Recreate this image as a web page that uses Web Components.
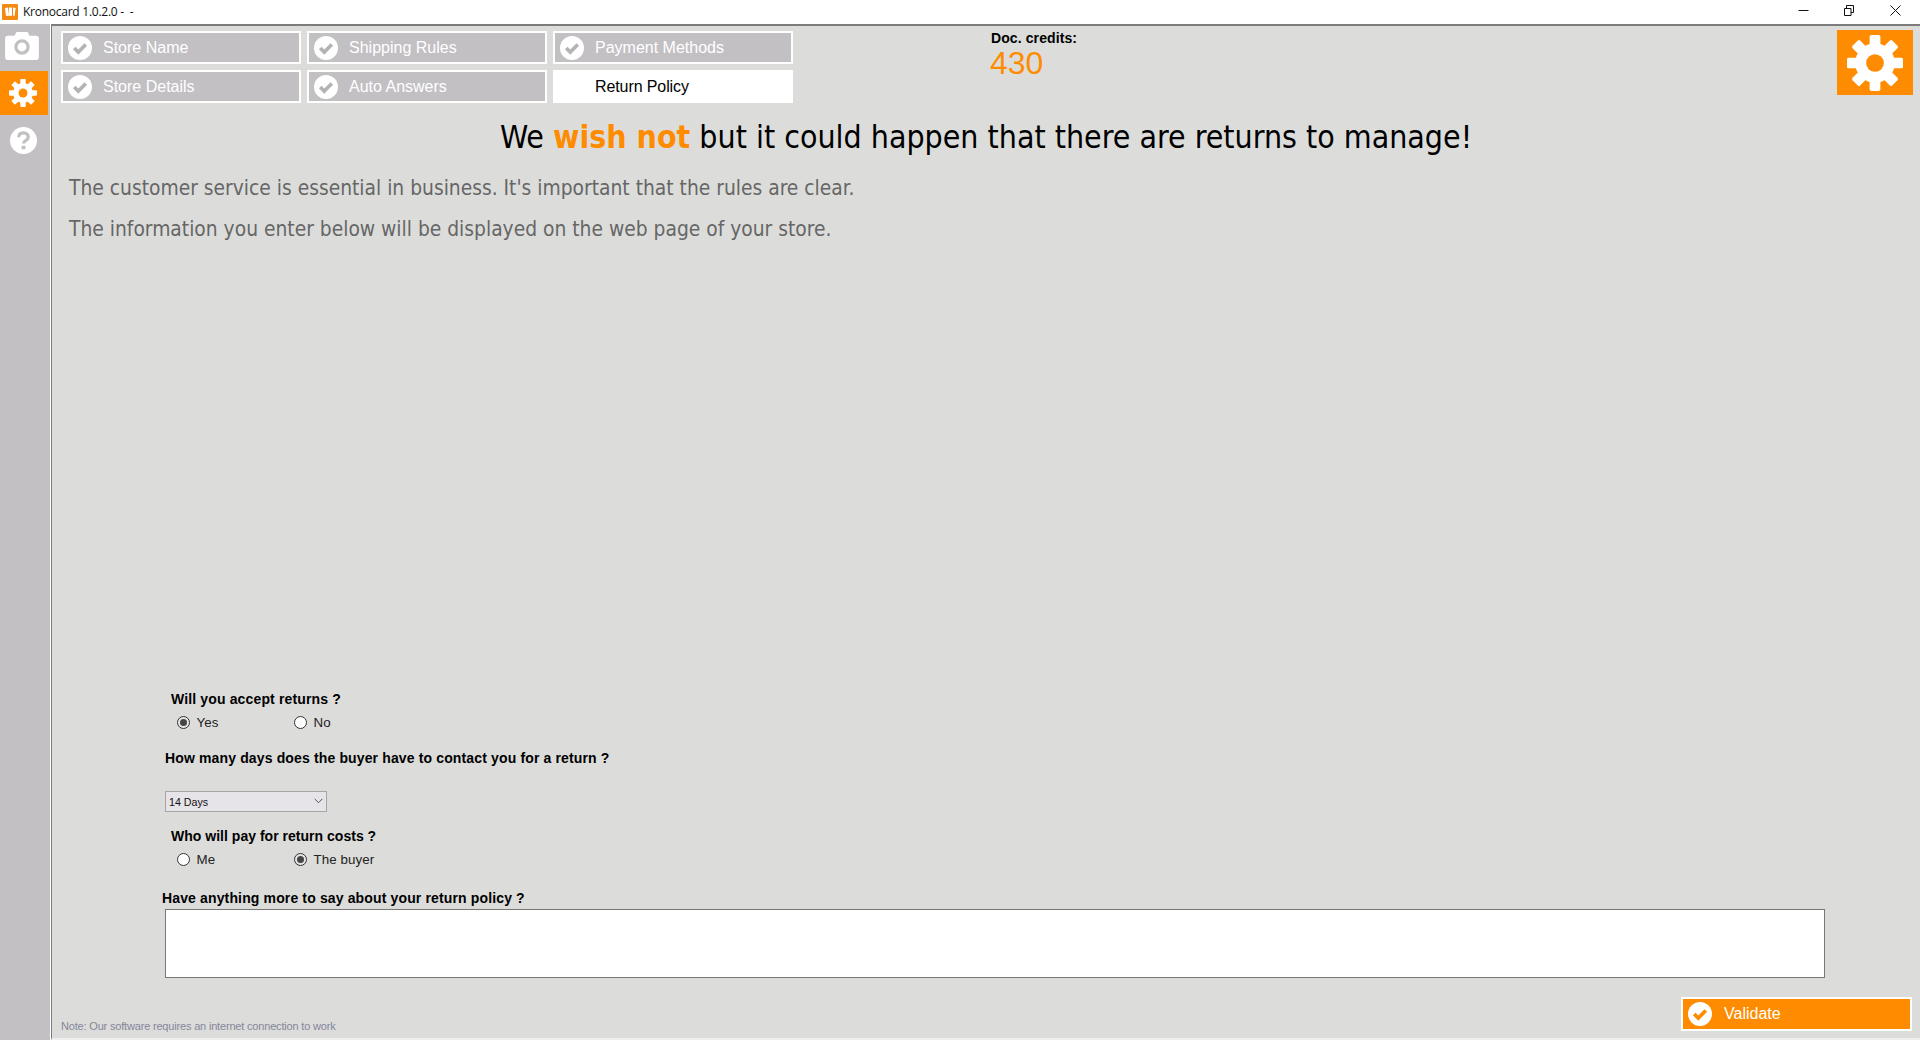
<!DOCTYPE html>
<html>
<head>
<meta charset="utf-8">
<title>Kronocard</title>
<style>
    html, body { margin: 0; height: 100%; overflow: hidden; }
    body { font-family: "Liberation Sans", Arial, sans-serif; background: #dcdddb; }
</style>
</head>
<body>
<kro-window>
    <kro-titlebar slot="bar" caption="Kronocard 1.0.2.0 -  -"></kro-titlebar>
    <kro-rail slot="rail"></kro-rail>
    <kro-header>
        <kro-tab done>Store Name</kro-tab>
        <kro-tab done>Shipping Rules</kro-tab>
        <kro-tab done>Payment Methods</kro-tab>
        <kro-tab done>Store Details</kro-tab>
        <kro-tab done>Auto Answers</kro-tab>
        <kro-tab current>Return Policy</kro-tab>
    </kro-header>
    <kro-intro></kro-intro>
    <kro-return-form></kro-return-form>
</kro-window>

<script>
// gear is used twice (rail + top right), hole takes the colour of the tile behind it
function gearSvg(size, hole) {
    let teeth = "";
    for (let a = 0; a < 360; a += 45) {
        teeth += `<rect x="-4.6" y="-24" width="9.2" height="12" rx="1.4" transform="rotate(${a})"/>`;
    }
    return `<svg width="${size}" height="${size}" viewBox="-24 -24 48 48" fill="#fff">
        ${teeth}<circle r="17"/><circle r="7.6" fill="${hole}"/></svg>`;
}

function checkSvg(color) {
    return `<svg width="24" height="24" viewBox="0 0 24 24">
        <circle cx="12" cy="12" r="12" fill="#fff"/>
        <path d="M6.2 12l4.100 4.100 7.500-7.500" fill="none" stroke="${color}" stroke-width="3.600"/></svg>`;
}

class KroWindow extends HTMLElement {
    constructor() {
        super();
        this.attachShadow({ mode: "open" });
        this.shadowRoot.innerHTML = `
            <style>
                :host { display: grid; grid-template-rows: 24px 1fr; grid-template-columns: 50px 1fr; width: 1920px; height: 1040px; }
                .bar { grid-column: 1 / 3; }
                .main {
                    display: flex; flex-direction: column; min-width: 0; min-height: 0;
                    border-left: 2px solid #fff; box-sizing: border-box;
                    background: #dcdddb;
                }
                .inner {
                    flex: 1; display: flex; flex-direction: column; min-height: 0;
                    border-left: 1px solid #7c7c7c; border-top: 2px solid #7c7c7c; border-bottom: 2px solid #eee;
                    margin-left: -1px;
                }
            </style>
            <div class="bar"><slot name="bar"></slot></div>
            <slot name="rail"></slot>
            <div class="main"><div class="inner"><slot></slot></div></div>
        `;
    }
}

class KroTitlebar extends HTMLElement {
    constructor() {
        super();
        this.attachShadow({ mode: "open" });
        this.shadowRoot.innerHTML = `
            <style>
                :host { display: flex; align-items: center; height: 24px; box-sizing: border-box; padding-bottom: 1px; background: #fff; font: 12px "Open Sans", "Noto Sans", sans-serif; color: #111; }
                .logo { margin: 0 5px 0 2px; display: block; }
                .cap { white-space: pre; letter-spacing: -0.25px; }
                .ctl { margin-left: auto; display: flex; align-self: flex-start; }
                .ctl svg { display: block; width: 46px; height: 20px; }
            </style>
            <svg class="logo" width="16" height="16" viewBox="0 0 16 16">
                <rect width="16" height="16" rx="1" fill="#f48a12"/>
                <path d="M3 4l3-.6 1 8-3 .6zM7 3.4h3v8.4H7zM11 3.4l2.6.5-1 8-1.6-.3z" fill="#fff"/>
            </svg>
            <span class="cap"></span>
            <div class="ctl">
                <svg viewBox="0 0 46 20"><path d="M16.500 10.500h10" stroke="#111" fill="none"/></svg>
                <svg viewBox="0 0 46 20"><path d="M16.500 8.500h6.500v7h-6.500zM18.500 8.500v-3h7v7h-2.500" stroke="#111" fill="none"/></svg>
                <svg viewBox="0 0 46 20"><path d="M16.500 5.500l10 10M26.500 5.500l-10 10" stroke="#111" fill="none"/></svg>
            </div>
        `;
    }
    connectedCallback() {
        this.shadowRoot.querySelector(".cap").textContent = this.getAttribute("caption");
    }
}

class KroRail extends HTMLElement {
    constructor() {
        super();
        this.attachShadow({ mode: "open" });
        this.shadowRoot.innerHTML = `
            <style>
                :host { display: flex; flex-direction: column; background: #c3c0c4; }
                .item { width: 46px; padding-right: 2px; display: flex; align-items: center; justify-content: center; }
                .cam { height: 47px; align-items: flex-start; }
                .cam svg { margin: 7px 2px 0 0; }
                .on { height: 44px; background: #ff8c00; }
                .help { height: 50px; }
                svg { display: block; }
            </style>
            <div class="item cam">
                <svg width="34" height="30" viewBox="0 0 36 32">
                    <path d="M3 5h7l2-4h12l2 4h7a3 3 0 0 1 3 3v20a3 3 0 0 1-3 3H3a3 3 0 0 1-3-3V8a3 3 0 0 1 3-3z" fill="#fff"/>
                    <circle cx="18" cy="17" r="6.500" fill="none" stroke="#c3c0c4" stroke-width="3.500"/>
                </svg>
            </div>
            <div class="item on">${gearSvg(28, "#ff8c00")}</div>
            <div class="item help">
                <svg width="27" height="27" viewBox="0 0 28 28">
                    <circle cx="14" cy="14" r="14" fill="#fff"/>
                    <path d="M9 10.500c0-3 2.300-4.500 5-4.500s5 1.700 5 4.300c0 3.700-5 3.700-5 6.700" fill="none" stroke="#c3c0c4" stroke-width="3.400"/>
                    <rect x="12" y="19.500" width="4" height="3.600" fill="#c3c0c4"/>
                </svg>
            </div>
        `;
    }
}

class KroHeader extends HTMLElement {
    constructor() {
        super();
        this.attachShadow({ mode: "open" });
        this.shadowRoot.innerHTML = `
            <style>
                :host { display: flex; align-items: flex-start; padding: 5px 7px 0 9px; }
                .tabs { display: grid; grid-template-columns: repeat(3, 240px); grid-auto-rows: 33px; column-gap: 6px; row-gap: 6px; }
                .credits { margin-left: 197px; color: #000; }
                .credits b { display: block; font-size: 14px; line-height: 15px; margin-left: 1px; letter-spacing: 0.1px; }
                .credits span { display: block; font-size: 32px; line-height: 34px; color: #ff8c00; }
                .gear { margin-left: auto; margin-top: -1px; width: 76px; height: 65px; background: #ff8c00; display: flex; align-items: center; justify-content: center; }
                svg { display: block; }
            </style>
            <div class="tabs"><slot></slot></div>
            <div class="credits"><b>Doc. credits:</b><span>430</span></div>
            <div class="gear">${gearSvg(56, "#ff8c00")}</div>
        `;
    }
}

class KroTab extends HTMLElement {
    constructor() {
        super();
        this.attachShadow({ mode: "open" });
        this.shadowRoot.innerHTML = `
            <style>
                :host {
                    display: flex; align-items: center; box-sizing: border-box; position: relative;
                    padding-left: 40px; border: 2px solid #fff; background: #c3c0c4; color: #fff; font-size: 16px;
                }
                :host([current]) { background: #fff; color: #000; letter-spacing: -0.1px; }
                .ic { position: absolute; left: 5px; top: 2.500px; display: block; }
            </style>
            <span class="ic"></span>
            <slot></slot>
        `;
    }
    connectedCallback() {
        if (this.hasAttribute("done")) {
            this.shadowRoot.querySelector(".ic").innerHTML = checkSvg("#b5b2b6");
        }
    }
}

class KroIntro extends HTMLElement {
    constructor() {
        super();
        this.attachShadow({ mode: "open" });
        this.shadowRoot.innerHTML = `
            <style>
                :host { display: block; font-family: "DejaVu Sans Condensed", "DejaVu Sans", sans-serif; }
                h1 { margin: 14px 0 0; font-weight: normal; font-size: 31.800px; line-height: 40px; text-align: center; color: #000; }
                h1 b { color: #ff8c00; }
                p { margin: 0 0 0 17px; font-size: 20.800px; line-height: 41px; color: #666; }
                h1 + p { margin-top: 11px; }
            </style>
            <h1>We <b>wish not</b> but it could happen that there are returns to manage!</h1>
            <p>The customer service is essential in business. It's important that the rules are clear.</p>
            <p>The information you enter below will be displayed on the web page of your store.</p>
        `;
    }
}

class KroRadioGroup extends HTMLElement {
    constructor() {
        super();
        this.attachShadow({ mode: "open" });
        this.shadowRoot.innerHTML = `
            <style>
                :host { display: grid; grid-template-columns: 117px 117px; height: 16px; }
                label { display: flex; align-items: center; gap: 7px; font-size: 13.330px; color: #222; letter-spacing: 0.1px; }
                input { appearance: none; margin: 0; width: 13px; height: 13px; border: 1px solid #333; border-radius: 50%; background: #fff; display: grid; place-items: center; box-sizing: border-box; }
                input:checked { background: #e6e6e6; }
                input:checked::before { content: ""; width: 7px; height: 7px; border-radius: 50%; background: #444; }
            </style>
        `;
    }
    connectedCallback() {
        const name = this.getAttribute("name");
        const checked = this.getAttribute("value");
        this.getAttribute("options").split("|").forEach((opt) => {
            const row = document.createElement("label");
            row.innerHTML = `<input type="radio" name="${name}"><span>${opt}</span>`;
            row.querySelector("input").checked = opt === checked;
            this.shadowRoot.appendChild(row);
        });
    }
}

class KroValidate extends HTMLElement {
    constructor() {
        super();
        this.attachShadow({ mode: "open" });
        this.shadowRoot.innerHTML = `
            <style>
                :host {
                    display: flex; align-items: center; gap: 12px; box-sizing: border-box; width: 231px; height: 34px;
                    padding-left: 5px; border: 2px solid #fff; background: #ff8c00; color: #fff; font-size: 16px;
                }
                svg { display: block; }
            </style>
            ${checkSvg("#ff8c00")}
            <slot></slot>
        `;
    }
}

class KroReturnForm extends HTMLElement {
    constructor() {
        super();
        this.attachShadow({ mode: "open" });
        this.shadowRoot.innerHTML = `
            <style>
                :host { display: block; margin-top: auto; padding-bottom: 7px; }
                .q { display: block; font-size: 14px; font-weight: bold; line-height: 16px; color: #000; letter-spacing: 0.14px; }
                .a { margin-left: 124.500px; }
                .q1 { margin-left: 119px; }
                .r1 { margin-top: 7px; }
                .q2 { margin-left: 113px; margin-top: 20px; }
                .pick { position: relative; width: 162px; margin: 25px 0 0 113px; }
                select {
                    appearance: none; display: block; width: 100%; height: 21px; box-sizing: border-box; margin: 0;
                    padding: 0 0 0 3px; border: 1px solid #a5a5a5; border-radius: 0; background: #e6e3e9; font: 10.670px "Liberation Sans", sans-serif; color: #111;
                }
                .pick svg { position: absolute; right: 4px; top: 7px; pointer-events: none; }
                .q3 { margin-left: 119px; margin-top: 16px; letter-spacing: 0.02px; }
                .r2 { margin-top: 7px; }
                .q4 { margin-left: 110px; margin-top: 23px; }
                textarea {
                    display: block; box-sizing: border-box; margin: 3px 94px 0 113px; width: 1660px; height: 69px;
                    border: 1px solid #777; background: #fff; resize: none; padding: 2px; outline: none;
                }
                .foot { display: flex; justify-content: space-between; align-items: flex-end; margin-top: 19px; padding: 0 8px 0 9px; }
                .note { font-size: 11px; line-height: 13px; margin-bottom: -2px; color: #85859a; letter-spacing: -0.18px; }
            </style>
            <label class="q q1">Will you accept returns ?</label>
            <kro-radio-group class="a r1" name="accept" options="Yes|No" value="Yes"></kro-radio-group>
            <label class="q q2">How many days does the buyer have to contact you for a return ?</label>
            <div class="pick">
                <select><option>14 Days</option><option>30 Days</option><option>60 Days</option></select>
                <svg width="9" height="6" viewBox="0 0 9 6"><path d="M.7.900l3.800 3.800L8.300.9" fill="none" stroke="#555" stroke-width="1"/></svg>
            </div>
            <label class="q q3">Who will pay for return costs ?</label>
            <kro-radio-group class="a r2" name="cost" options="Me|The buyer" value="The buyer"></kro-radio-group>
            <label class="q q4">Have anything more to say about your return policy ?</label>
            <textarea></textarea>
            <div class="foot">
                <span class="note">Note: Our software requires an internet connection to work</span>
                <kro-validate>Validate</kro-validate>
            </div>
        `;
    }
}

customElements.define("kro-window", KroWindow);
customElements.define("kro-titlebar", KroTitlebar);
customElements.define("kro-rail", KroRail);
customElements.define("kro-header", KroHeader);
customElements.define("kro-tab", KroTab);
customElements.define("kro-intro", KroIntro);
customElements.define("kro-radio-group", KroRadioGroup);
customElements.define("kro-validate", KroValidate);
customElements.define("kro-return-form", KroReturnForm);
</script>
</body>
</html>
